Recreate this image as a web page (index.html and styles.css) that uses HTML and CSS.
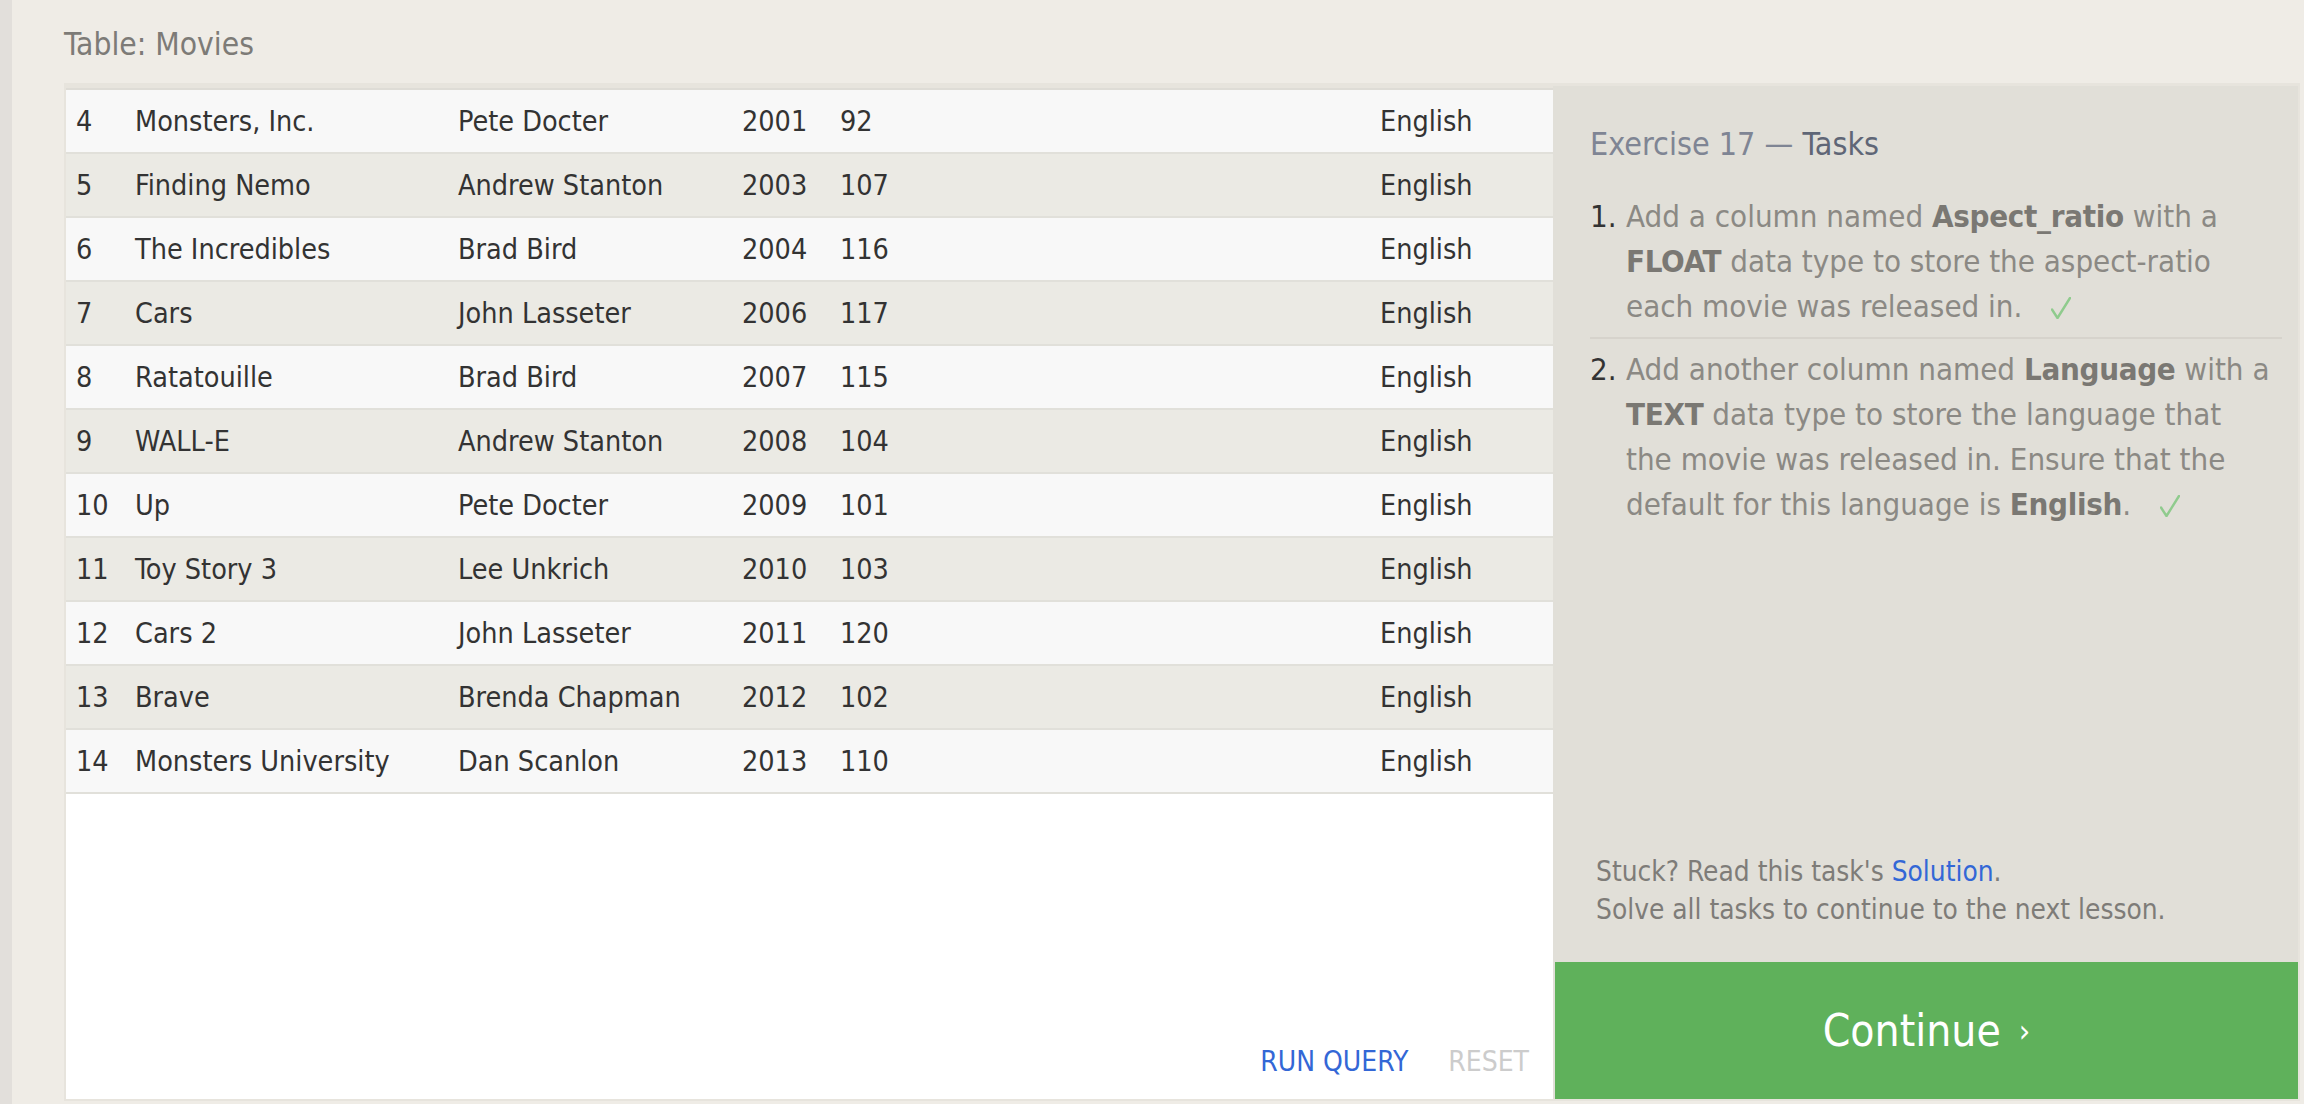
FILE: index.html
```html
<!DOCTYPE html>
<html lang="en">
<head>
<meta charset="utf-8">
<title>SQL Lesson – Exercise 17</title>
<link rel="stylesheet" href="styles.css">
</head>
<body>
<div class="page">
  <div class="rail"></div>
  <main class="main">
    <h2 class="table-title">Table: Movies</h2>
    <div class="workspace">
      <section class="results">
        <div class="rows">
          <div class="row"><span>4</span><span>Monsters, Inc.</span><span>Pete Docter</span><span>2001</span><span>92</span><span>English</span></div>
          <div class="row"><span>5</span><span>Finding Nemo</span><span>Andrew Stanton</span><span>2003</span><span>107</span><span>English</span></div>
          <div class="row"><span>6</span><span>The Incredibles</span><span>Brad Bird</span><span>2004</span><span>116</span><span>English</span></div>
          <div class="row"><span>7</span><span>Cars</span><span>John Lasseter</span><span>2006</span><span>117</span><span>English</span></div>
          <div class="row"><span>8</span><span>Ratatouille</span><span>Brad Bird</span><span>2007</span><span>115</span><span>English</span></div>
          <div class="row"><span>9</span><span>WALL-E</span><span>Andrew Stanton</span><span>2008</span><span>104</span><span>English</span></div>
          <div class="row"><span>10</span><span>Up</span><span>Pete Docter</span><span>2009</span><span>101</span><span>English</span></div>
          <div class="row"><span>11</span><span>Toy Story 3</span><span>Lee Unkrich</span><span>2010</span><span>103</span><span>English</span></div>
          <div class="row"><span>12</span><span>Cars 2</span><span>John Lasseter</span><span>2011</span><span>120</span><span>English</span></div>
          <div class="row"><span>13</span><span>Brave</span><span>Brenda Chapman</span><span>2012</span><span>102</span><span>English</span></div>
          <div class="row"><span>14</span><span>Monsters University</span><span>Dan Scanlon</span><span>2013</span><span>110</span><span>English</span></div>
        </div>
        <div class="actions">
          <span class="run">RUN QUERY</span>
          <span class="reset">RESET</span>
        </div>
      </section>
      <aside class="tasks">
        <div class="tasks-body">
          <h3 class="tasks-title"><span class="ex">Exercise 17 —</span> <span class="tk">Tasks</span></h3>
          <ol class="task-list">
            <li class="task first"><span class="num">1.</span><span class="txt">Add a column named <b>Aspect_ratio</b> with a<br><b>FLOAT</b> data type to store the aspect-ratio<br>each movie was released in. <svg class="check" viewBox="0 0 20 22" width="20" height="22" aria-label="done"><path d="M1 12.5 L6.5 21 L19 1"/></svg></span></li>
            <li class="task"><span class="num">2.</span><span class="txt">Add another column named <b>Language</b> with a<br><b>TEXT</b> data type to store the language that<br>the movie was released in. Ensure that the<br>default for this language is <b>English</b>. <svg class="check" viewBox="0 0 20 22" width="20" height="22" aria-label="done"><path d="M1 12.5 L6.5 21 L19 1"/></svg></span></li>
          </ol>
        </div>
        <div class="help">
          <p>Stuck? Read this task's <a class="solution" href="#">Solution</a>.</p>
          <p>Solve all tasks to continue to the next lesson.</p>
        </div>
        <a class="continue" href="#">Continue<span class="chev">›</span></a>
      </aside>
    </div>
  </main>
</div>
</body>
</html>
```
FILE: styles.css
```css
html, body {
  margin: 0;
  padding: 0;
}
body {
  width: 2304px;
  height: 1104px;
  overflow: hidden;
  background: #efece6;
  font-family: "DejaVu Sans Condensed", "DejaVu Sans", sans-serif;
  font-stretch: condensed;
  color: #333;
}
.page {
  display: flex;
  height: 1104px;
}
.rail {
  width: 12px;
  flex: none;
  background: #e2dfdb;
}
.main {
  flex: 1;
  padding: 0 4px 0 52px;
  display: flex;
  flex-direction: column;
}
.table-title {
  margin: 24px 0 19px;
  font-size: 31.5px;
  line-height: 40px;
  font-weight: normal;
  color: #7d7b77;
}
.workspace {
  display: flex;
  border: 2px solid #e7e4dd;
  height: 1014px;
  flex: none;
}
.results {
  width: 1487px;
  flex: none;
  background: #fff;
  border-top: 3px solid #e7e4dd;
  display: flex;
  flex-direction: column;
}
.rows {
  border-top: 2px solid #dedcd6;
}
.row {
  display: grid;
  grid-template-columns: 59px 323px 284px 98px 540px 1fr;
  align-items: center;
  height: 62px;
  padding-left: 10px;
  border-bottom: 2px solid #e1e0da;
  background: #f8f8f8;
  font-size: 28.5px;
  color: #333;
  white-space: nowrap;
}
.row:nth-child(even) {
  background: #ebeae4;
}
.actions {
  margin-top: auto;
  display: flex;
  justify-content: flex-end;
  gap: 40px;
  padding: 0 24px 17px 0;
  font-size: 28px;
  line-height: 40px;
}
.run {
  color: #3367d6;
}
.reset {
  color: #cccccc;
}
.tasks {
  flex: 1;
  display: flex;
  flex-direction: column;
  background: #e1dfd8;
  border-top: 1px solid #e7e4dd;
}
.tasks-body {
  padding: 38px 16px 0 37px;
}
.tasks-title {
  margin: 0;
  font-size: 32px;
  line-height: 40px;
  font-weight: normal;
}
.ex {
  color: #7f8594;
}
.tk {
  color: #5f6676;
}
.task-list {
  list-style: none;
  margin: 30px 0 0;
  padding: 0;
}
.task {
  display: flex;
  font-size: 31px;
  line-height: 45px;
  padding: 0 0 8px;
  white-space: nowrap;
}
.task + .task {
  padding-top: 8px;
}
.task.first {
  border-bottom: 2px solid #d6d3cc;
}
.num {
  width: 36px;
  flex: none;
  color: #333;
}
.txt {
  flex: 1;
  color: #8b8984;
}
.txt b {
  color: #7a7873;
  letter-spacing: -0.3px;
}
.check {
  margin-left: 20px;
  vertical-align: -2px;
  fill: none;
  stroke: #8fcb8d;
  stroke-width: 2.4;
  stroke-linecap: round;
  stroke-linejoin: round;
}
.help {
  margin-top: auto;
  padding: 0 16px 33px 43px;
  font-size: 27.8px;
  line-height: 38px;
  color: #7e7c78;
}
.help p {
  margin: 0;
}
.solution {
  color: #3367d6;
  text-decoration: none;
}
.continue {
  display: flex;
  align-items: center;
  justify-content: center;
  height: 137px;
  margin-left: 2px;
  background: #5fb15b;
  color: #fff;
  font-size: 44px;
  text-decoration: none;
}
.chev {
  font-size: 32px;
  margin-left: 18px;
}
```
